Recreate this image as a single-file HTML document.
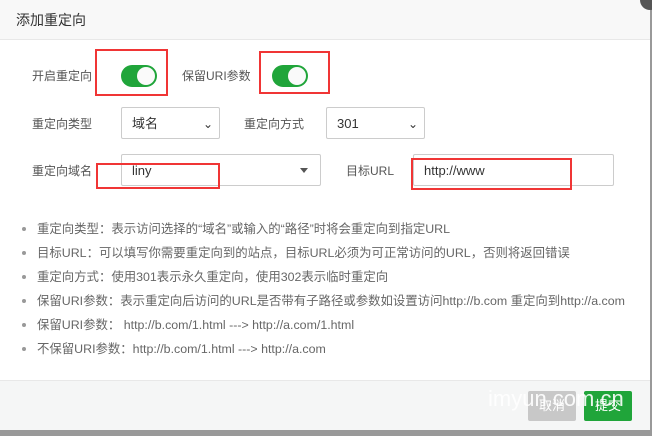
<!DOCTYPE html>
<html><head><meta charset="utf-8"><style>
*{box-sizing:border-box;margin:0;padding:0}
body{width:652px;height:436px;overflow:hidden;background:#fff;font-family:"Liberation Sans","Noto Sans CJK SC",sans-serif;position:relative;color:#333}
.a{position:absolute}
.hdr{left:0;top:0;width:650px;height:40px;background:#f8f8f8;border-bottom:1px solid #e8e8e8;font-size:14px;line-height:40px;padding-left:16px;color:#333}
.lbl{font-size:12px;color:#555;line-height:16px}
.tg{width:36px;height:22px;border-radius:11px;background:#20a53a}
.tg:after{content:"";position:absolute;right:2px;top:2px;width:18px;height:18px;border-radius:50%;background:#fafafa}
.sel{border:1px solid #ccc;border-radius:2px;height:32px;font-size:13px;line-height:32px;padding-left:10px;color:#333}
.red{border:2px solid #f03535}
li{position:absolute;left:37px;font-size:12.4px;color:#666;list-style:none;white-space:nowrap;line-height:16px}
li:before{content:"";position:absolute;left-:0;left:-15px;top:6px;width:4px;height:4px;border-radius:50%;background:#999}
</style></head><body>
<div class="a hdr">添加重定向</div>
<div class="a" style="right:0;top:0;width:2px;height:436px;background:#999"></div>
<div class="a" style="left:640px;top:-10px;width:20px;height:20px;border-radius:50%;background:#555"></div>
<div class="a lbl" style="left:32px;top:68px">开启重定向</div>
<div class="a tg" style="left:121px;top:65px"></div>
<div class="a lbl" style="left:182px;top:68px">保留URI参数</div>
<div class="a tg" style="left:272px;top:65px"></div>
<div class="a red" style="left:95px;top:49px;width:73px;height:47px"></div>
<div class="a red" style="left:259px;top:51px;width:71px;height:43px"></div>
<div class="a lbl" style="left:32px;top:116px">重定向类型</div>
<div class="a sel" style="left:121px;top:107px;width:99px">域名<span class="a" style="right:6px;top:0;font-size:12px">⌄</span></div>
<div class="a lbl" style="left:244px;top:116px">重定向方式</div>
<div class="a sel" style="left:326px;top:107px;width:99px">301<span class="a" style="right:6px;top:0;font-size:12px">⌄</span></div>
<div class="a lbl" style="left:32px;top:163px">重定向域名</div>
<div class="a sel" style="left:121px;top:154px;width:200px">liny<span class="a" style="right:12px;top:13px;width:0;height:0;border:4px solid transparent;border-top:5px solid #555"></span></div>
<div class="a lbl" style="left:346px;top:163px">目标URL</div>
<div class="a sel" style="left:413px;top:154px;width:201px">http://www</div>
<div class="a red" style="left:96px;top:163px;width:124px;height:26px"></div>
<div class="a red" style="left:411px;top:158px;width:161px;height:32px"></div>
<ul>
<li style="top:221px">重定向类型：表示访问选择的“域名”或输入的“路径”时将会重定向到指定URL</li>
<li style="top:245px">目标URL：可以填写你需要重定向到的站点，目标URL必须为可正常访问的URL，否则将返回错误</li>
<li style="top:269px">重定向方式：使用301表示永久重定向，使用302表示临时重定向</li>
<li style="top:293px">保留URI参数：表示重定向后访问的URL是否带有子路径或参数如设置访问http://b.com 重定向到http://a.com</li>
<li style="top:317px">保留URI参数： http://b.com/1.html ---&gt; http://a.com/1.html</li>
<li style="top:341px">不保留URI参数：http://b.com/1.html ---&gt; http://a.com</li>
</ul>
<div class="a" style="left:0;top:380px;width:650px;height:50px;background:#f5f6f6;border-top:1px solid #e8e8e8"></div>
<div class="a" style="left:0;top:430px;width:652px;height:6px;background:#999"></div>
<div class="a" style="left:528px;top:391px;width:48px;height:30px;background:#c8c8c8;border-radius:2px;color:#fff;font-size:13px;line-height:30px;text-align:center">取消</div>
<div class="a" style="left:584px;top:391px;width:48px;height:30px;background:#20a53a;border-radius:2px;color:#fff;font-size:13px;line-height:30px;text-align:center">提交</div>
<div class="a" style="left:488px;top:386px;font-size:22px;color:rgba(255,255,255,0.9);line-height:26px">imyun.com.cn</div>
</body></html>
